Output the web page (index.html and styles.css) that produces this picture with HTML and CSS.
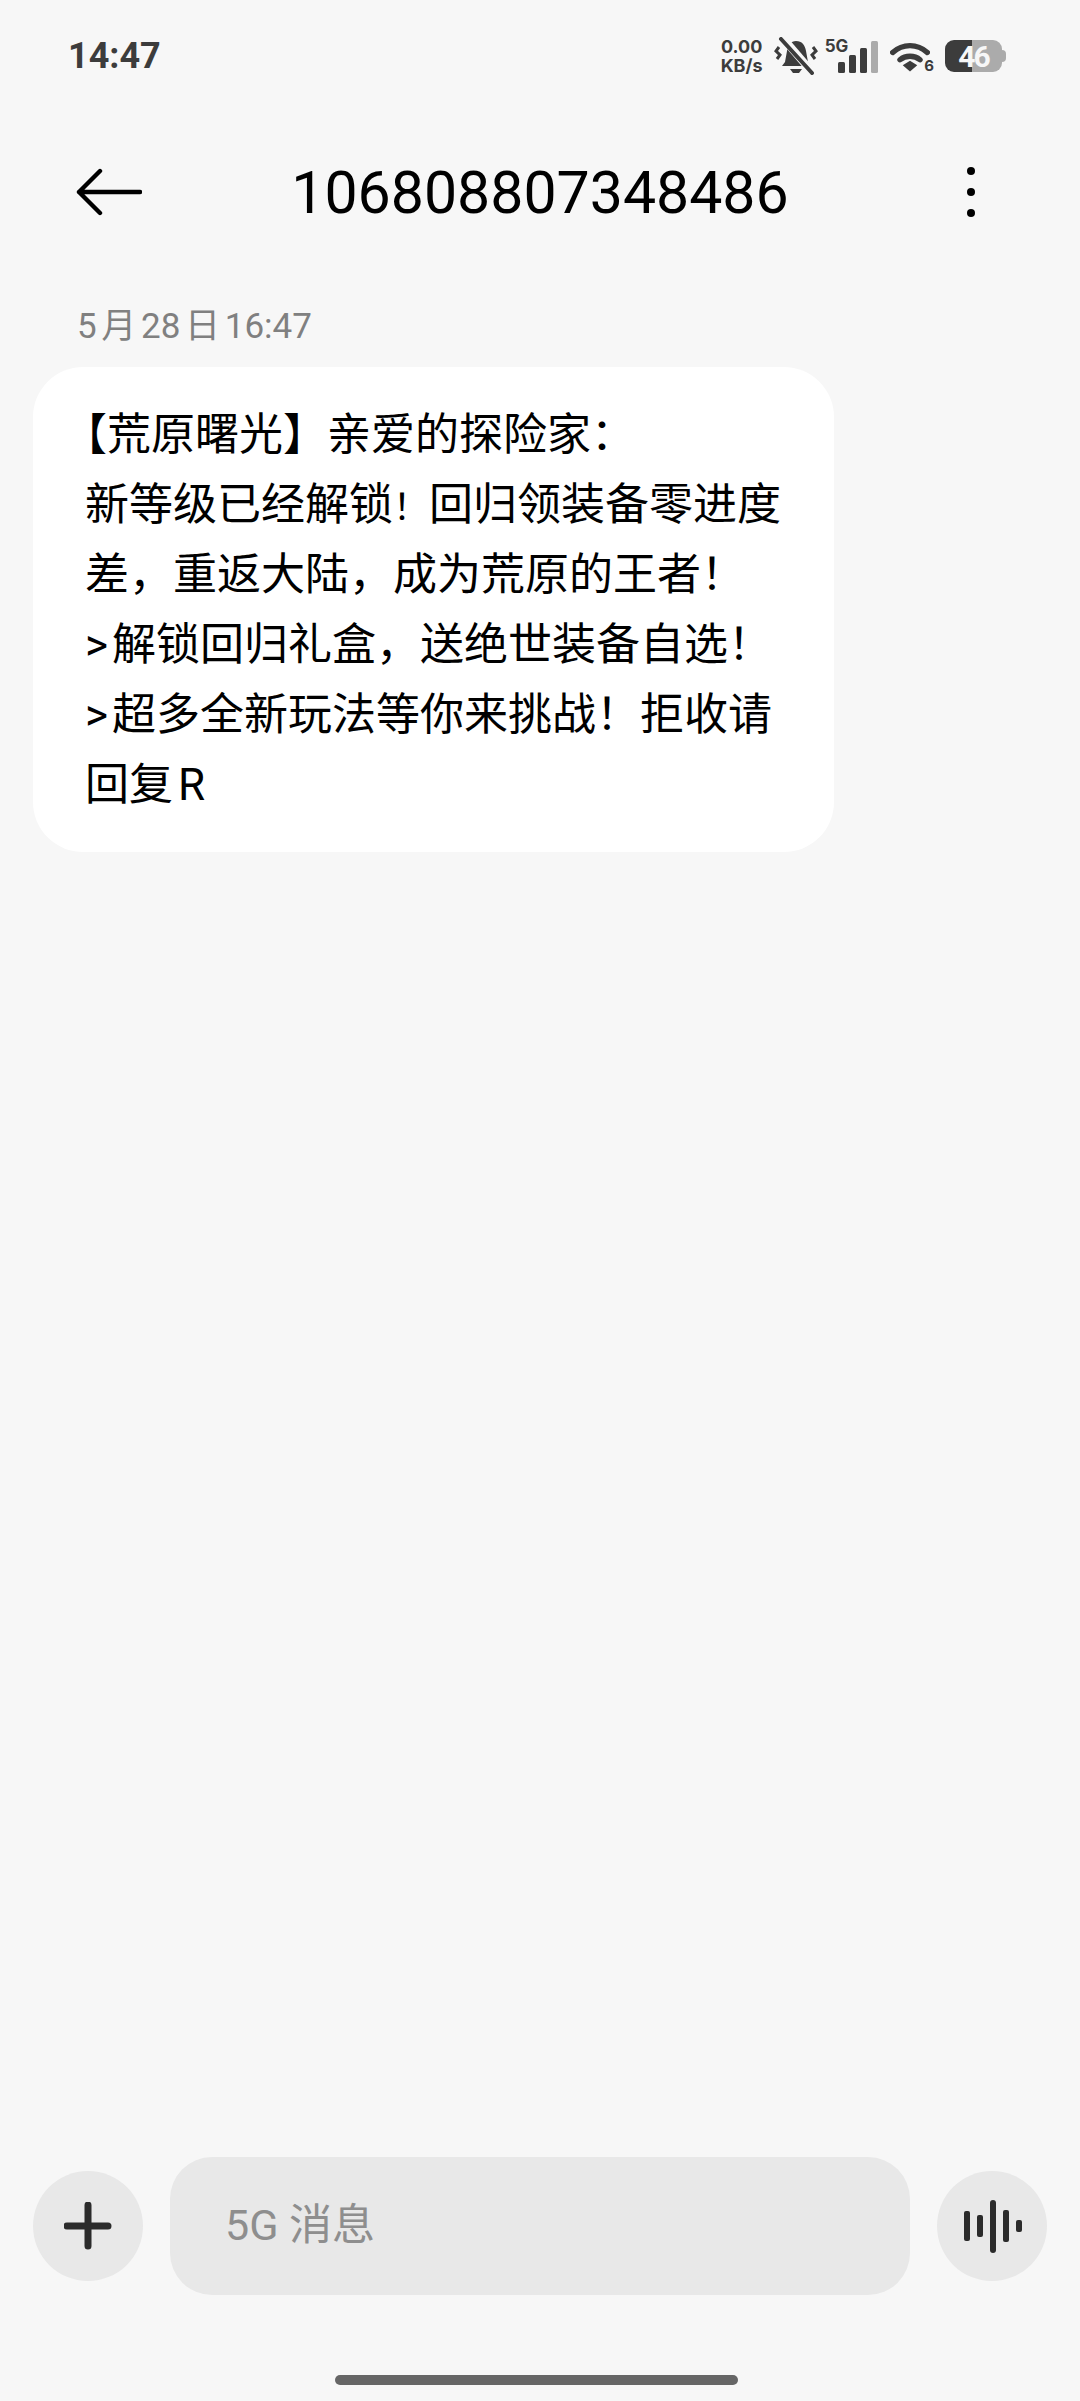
FILE: index.html
```html
<!doctype html>
<html>
    <head>
        <title>106808807348486</title>
        <link rel="stylesheet" href="styles.css">
    </head>
    <body>
        <header class="status">
            <span class="time">14:47</span>
            <div class="status-icons">
                <span class="speed">0.00<br>KB/s</span>
                <svg class="icon-bell" width="44" height="38" viewBox="0 0 44 38">
                    <path d="M22 4c6 0 9 4 10 10l2 11 3 4H8l3-4 2-11c1-6 4-10 9-10z" fill="#3c3c3c"/>
                    <path d="M16 32h12l-3 4h-6z" fill="#3c3c3c"/>
                    <path d="M7 -1l31 36" stroke="#f7f7f7" stroke-width="8"/>
                    <path d="M7 2l31 34" stroke="#3c3c3c" stroke-width="4" stroke-linecap="round"/>
                    <path d="M5 10l-3 4 4 4-3 4M39 10l3 4-4 4 3 4" stroke="#3c3c3c" stroke-width="3" fill="none"/>
                </svg>
                <div class="signal">
                    <span class="net">5G</span>
                    <svg width="40" height="33" viewBox="0 0 40 33">
                        <rect x="0" y="21" width="7" height="11" rx="1.5" fill="#3c3c3c"/>
                        <rect x="11" y="14" width="7" height="18" rx="1.5" fill="#3c3c3c"/>
                        <rect x="22" y="7" width="7" height="25" rx="1.5" fill="#3c3c3c"/>
                        <rect x="33" y="0" width="7" height="32" rx="1.5" fill="#ababab"/>
                    </svg>
                </div>
                <div class="wifi">
                    <svg width="40" height="32" viewBox="0 0 44 32">
                        <path d="M3 11c11-10 27-10 38 0" fill="none" stroke="#3c3c3c" stroke-width="6" stroke-linecap="round"/>
                        <path d="M11 19c6-5 16-5 22 0" fill="none" stroke="#3c3c3c" stroke-width="6" stroke-linecap="round"/>
                        <path d="M14 25l8-5 8 5-8 7z" fill="#3c3c3c"/>
                    </svg>
                    <span class="wifi-num">6</span>
                </div>
                <div class="battery">
                    <span class="battery-level">46</span>
                    <span class="battery-cap"></span>
                </div>
            </div>
        </header>

        <nav class="titlebar">
            <svg class="back" width="66" height="48" viewBox="0 0 66 48">
                <path d="M24 3L3 24l21 21M3 24h61" fill="none" stroke="#000" stroke-width="4.4" stroke-linecap="round" stroke-linejoin="round"/>
            </svg>
            <h1 class="title">106808807348486</h1>
            <div class="more">
                <span class="dot"></span>
                <span class="dot"></span>
                <span class="dot"></span>
            </div>
        </nav>

        <main class="thread">
            <p class="date">5 月 28 日 16:47</p>
            <div class="bubble">【荒原曙光】亲爱的探险家：<br>新等级已经解锁<span class="tight">！</span>回归领装备零进度<br>差，重返大陆，成为荒原的王者！<br><span class="gt">&gt;</span>解锁回归礼盒，送绝世装备自选！<br><span class="gt">&gt;</span>超多全新玩法等你来挑战！拒收请<br>回复 R</div>
        </main>

        <footer class="composer">
            <div class="round-btn">
                <svg width="48" height="48" viewBox="0 0 48 48">
                    <path d="M24 3v41M3 24h41" stroke="#2b2b2b" stroke-width="7" stroke-linecap="round"/>
                </svg>
            </div>
            <div class="input">5G 消息</div>
            <div class="round-btn">
                <svg width="60" height="54" viewBox="0 0 60 54">
                    <rect x="2" y="12" width="6" height="30" rx="2" fill="#2b2b2b"/>
                    <rect x="15" y="16" width="6" height="22" rx="2" fill="#2b2b2b"/>
                    <rect x="28" y="1" width="6" height="53" rx="3" fill="#2b2b2b"/>
                    <rect x="41" y="11" width="6" height="32" rx="2" fill="#2b2b2b"/>
                    <rect x="54" y="21" width="6" height="12" rx="2" fill="#2b2b2b"/>
                </svg>
            </div>
        </footer>
        <div class="home-row"><span class="home-bar"></span></div>
    </body>
</html>
```

FILE: styles.css
```css
html,
body {
    margin: 0;
    height: 2401px;
    overflow: hidden;
}

body {
    display: flex;
    flex-direction: column;
    background: #f7f7f7;
    font-family: Roboto, "Noto Sans CJK SC", sans-serif;
    color: #000;
}

.status {
    display: flex;
    justify-content: space-between;
    align-items: center;
    height: 112px;
    padding: 0 78px 0 68px;
    color: #3c3c3c;
    flex-shrink: 0;
}

.time {
    font-weight: 700;
    font-size: 36px;
}

.status-icons {
    display: flex;
    align-items: center;
}

.speed {
    font-family: Inter, sans-serif;
    font-weight: 700;
    font-size: 18px;
    line-height: 19px;
    width: 52px;
    text-align: center;
    margin-right: 6px;
}

.signal {
    display: flex;
    align-items: flex-end;
    height: 35px;
    margin-left: 7px;
}

.net {
    font-family: Inter, sans-serif;
    font-weight: 700;
    font-size: 17px;
    line-height: 14px;
    align-self: flex-start;
    margin-right: -10px;
}

.wifi {
    display: flex;
    align-items: flex-end;
    height: 33px;
    margin-left: 12px;
}

.wifi-num {
    margin-left: -6px;
    font-family: Inter, sans-serif;
    font-weight: 700;
    font-size: 15px;
    line-height: 14px;
}

.battery {
    display: flex;
    align-items: center;
    justify-content: center;
    position: relative;
    width: 57px;
    height: 32px;
    margin-left: 11px;
    border-radius: 9px;
    background: linear-gradient(to right, #3c3c3c 48%, #ababab 48%);
    color: #f7f7f7;
    font-weight: 700;
    font-size: 30px;
    letter-spacing: -2px;
}

.battery-cap {
    position: absolute;
    right: -4px;
    top: 10px;
    width: 4px;
    height: 12px;
    border-radius: 0 4px 4px 0;
    background: #ababab;
}

.titlebar {
    display: flex;
    align-items: center;
    justify-content: space-between;
    height: 160px;
    padding: 0 76px;
    flex-shrink: 0;
}

.title {
    margin: 0;
    font-weight: 400;
    font-size: 59px;
}

.more {
    display: flex;
    flex-direction: column;
    align-items: center;
    gap: 13px;
    width: 66px;
}

.dot {
    width: 8px;
    height: 8px;
    border-radius: 50%;
    background: #000;
}

.thread {
    flex: 1;
    padding: 0 33px;
}

.date {
    margin: 31px 0 16px 44px;
    font-size: 35px;
    line-height: 48px;
    color: #808080;
    word-spacing: -4px;
}

.bubble {
    width: 801px;
    box-sizing: border-box;
    padding: 33px 0 32px 52px;
    border-radius: 50px;
    background: #fff;
    font-size: 44px;
    line-height: 70px;
    white-space: nowrap;
    text-indent: -22px;
    word-spacing: -6px;
}

.tight {
    font-size: 36px;
    line-height: 0;
}

.gt {
    margin-right: 4px;
}

.composer {
    display: flex;
    align-items: center;
    gap: 27px;
    padding: 0 33px;
    flex-shrink: 0;
}

.round-btn {
    display: flex;
    align-items: center;
    justify-content: center;
    width: 110px;
    height: 110px;
    border-radius: 50%;
    background: #e8e8e8;
    flex-shrink: 0;
}

.input {
    flex: 1;
    height: 138px;
    line-height: 136px;
    padding-left: 55px;
    border-radius: 42px;
    background: #e8e8e8;
    color: #8e8e8e;
    font-size: 43px;
}

.home-row {
    display: flex;
    justify-content: center;
    height: 106px;
    flex-shrink: 0;
}

.home-bar {
    width: 403px;
    height: 10px;
    margin: 80px 7px 0 0;
    border-radius: 5px;
    background: #666;
}
```
